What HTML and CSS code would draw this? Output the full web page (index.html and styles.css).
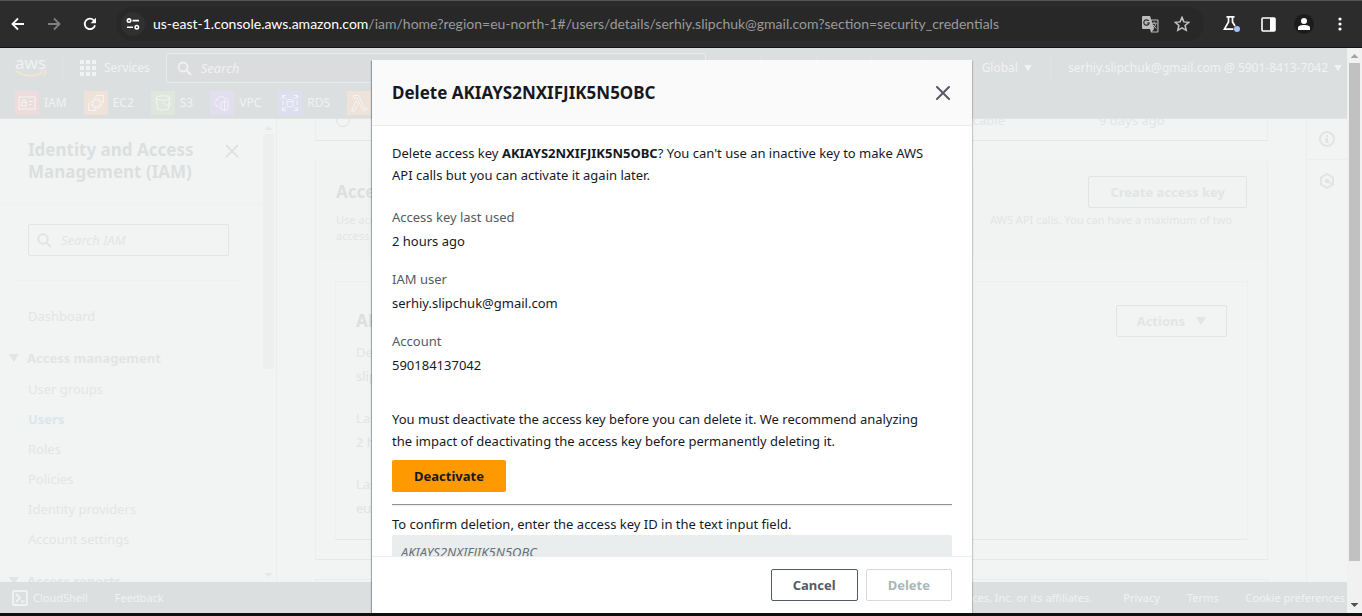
FILE: index.html
```html
<!DOCTYPE html>
<html lang="en">
<head>
<meta charset="utf-8">
<title>IAM | Security credentials</title>
<link rel="stylesheet" href="styles.css">
</head>
<body>
<header class="chrome">
  <button class="chrome-btn" aria-label="Back"><svg width="14" height="14" viewBox="0 0 14 14"><path d="M13 7H2M7 1.5 1.5 7 7 12.5" fill="none" stroke="#fff" stroke-width="1.8"/></svg></button>
  <button class="chrome-btn" aria-label="Forward"><svg width="14" height="14" viewBox="0 0 14 14"><path d="M1 7h11M7 1.5 12.500 7 7 12.500" fill="none" stroke="#808080" stroke-width="1.800"/></svg></button>
  <button class="chrome-btn" aria-label="Reload"><svg width="14" height="14" viewBox="0 0 14 14"><path d="M12 8.200A5.200 5.200 0 1 1 10.800 3.400L12 4.500" fill="none" stroke="#fff" stroke-width="1.800"/><path d="M13 .8v5.400H7.600z" fill="#fff"/></svg></button>
  <div class="omnibox">
    <button class="site-info" aria-label="Site information"><svg width="14" height="12" viewBox="0 0 14 12"><g fill="none" stroke="#fff" stroke-width="1.600"><circle cx="3" cy="2.600" r="1.700"/><path d="M6.500 2.600H13M1 9.200h6"/><circle cx="10.800" cy="9.200" r="1.700"/></g></svg></button>
    <div class="url"><span class="host">us-east-1.console.aws.amazon.com</span>/iam/home?region=eu-north-1#/users/details/serhiy.slipchuk@gmail.com?section=security_credentials</div>
    <button class="omni-btn" aria-label="Translate"><svg width="17" height="17" viewBox="0 0 17 17"><path d="M1 0h7l1.200 3.500H15.500a1 1 0 0 1 1 1V15.500a1 1 0 0 1-1 1H9L8 13H1a1 1 0 0 1-1-1V1a1 1 0 0 1 1-1z" fill="#bcbcbc"/><path d="M9.600 4.600h5.800v10.800H10l2-2.400z" fill="#2a2a2a"/><path d="M6.800 5A2.700 2.700 0 1 0 7.200 7H4.800" fill="none" stroke="#2a2a2a" stroke-width="1.200"/><path d="M9.800 7.200h5M12.200 5.800v1.400M14 7.500c-.5 2-1.600 3.400-3 4.500M10.800 8.500c.8 1.600 2 2.800 3.600 3.800" fill="none" stroke="#bcbcbc"/></svg></button>
    <button class="omni-btn" aria-label="Bookmark"><svg width="16" height="16" viewBox="0 0 16 16"><path d="m8 1.400 1.900 4.500 4.900.4-3.700 3.200 1.100 4.800L8 11.800l-4.200 2.500 1.100-4.800L1.200 6.300l4.900-.4z" fill="none" stroke="#c4c4c4" stroke-width="1.500"/></svg></button>
  </div>
  <div class="chrome-tools">
    <button class="chrome-btn" aria-label="Experiments"><svg width="18" height="18" viewBox="0 0 18 18"><path d="M3.500 1.800h8M5.500 2v5L1.400 14.200h9M9.500 2v5l2.500 4" fill="none" stroke="#fff" stroke-width="1.700"/><circle cx="14" cy="14" r="3" fill="#a0c3ff"/></svg></button>
    <button class="chrome-btn" aria-label="Side panel"><svg width="15" height="15" viewBox="0 0 15 15"><rect x="1" y="1" width="13" height="13" rx="1" fill="none" stroke="#fff" stroke-width="1.600"/><path d="M9 1h5v13H9z" fill="#fff"/></svg></button>
    <button class="chrome-btn avatar" aria-label="Profile"><svg width="20" height="20" viewBox="0 0 20 20"><circle cx="10" cy="10" r="10" fill="#1c1c1c"/><circle cx="10" cy="7" r="3" fill="#fff"/><path d="M4 16v-2.200C4 11.800 7 11 10 11s6 .8 6 2.800V16z" fill="#fff"/></svg></button>
    <button class="chrome-btn" aria-label="Menu"><svg width="4" height="14" viewBox="0 0 4 14"><g fill="#fff"><circle cx="2" cy="2" r="1.600"/><circle cx="2" cy="7" r="1.600"/><circle cx="2" cy="12" r="1.600"/></g></svg></button>
  </div>
</header>

<div class="viewport">
  <div class="page">
    <header class="top">
      <div class="top-row">
        <a class="logo" href="#" aria-label="AWS home"><span class="logo-text">aws</span><svg class="smile" width="32" height="9" viewBox="0 0 32 9"><path d="M1 1c8 6 19 6 27 1.500" fill="none" stroke="#f1e4d4" stroke-width="2"/><path d="M25 1c3-1 5-.8 5.500 0s-.4 3.500-2 5" fill="none" stroke="#f1e4d4" stroke-width="1.500"/></svg></a>
        <button class="services"><svg width="16" height="16" viewBox="0 0 16 16"><path d="M0 0h4v4H0zM6 0h4v4H6zM12 0h4v4h-4zM0 6h4v4H0zM6 6h4v4H6zM12 6h4v4h-4zM0 12h4v4H0zM6 12h4v4H6zM12 12h4v4h-4z" fill="#f1f2f2"/></svg>Services</button>
        <label class="top-search"><svg width="15" height="15" viewBox="0 0 15 15"><circle cx="6" cy="6" r="4.500" fill="none" stroke="#f1f2f2" stroke-width="1.800"/><path d="m9.500 9.500 4.500 4.500" stroke="#f1f2f2" stroke-width="2"/></svg><input type="search" placeholder="Search" aria-label="Search"></label>
        <div class="top-icons"><span></span><span></span><span></span><span></span></div>
        <button class="region">Global <i class="caret"></i></button>
        <button class="account">serhiy.slipchuk@gmail.com @ 5901-8413-7042 <i class="caret"></i></button>
      </div>
      <nav class="favs">
        <a href="#"><svg class="fav red" viewBox="0 0 24 24"><rect x="4" y="6" width="16" height="12"/><path d="M6.500 11.500h5V15h-5zM7.500 11.500V10a1.500 1.500 0 0 1 3 0v1.500M14 10.500h4M14 13.500h2.500"/></svg>IAM</a>
        <a href="#"><svg class="fav orange" viewBox="0 0 24 24"><path d="M9 9h7v7H9zM11 6.500V9M14 6.500V9M11 16v2.500M14 16v2.500M6.500 11H9M6.500 14H9M16 11h2.500M16 14h2.500M12 6V4.500h7.500V12H18M6 12H4.500v7.500H12V18"/></svg>EC2</a>
        <a href="#"><svg class="fav green" viewBox="0 0 24 24"><ellipse cx="12" cy="7" rx="7" ry="2.200"/><path d="m5 7 1.800 11c1.500 1.400 8.900 1.400 10.400 0L19 7M12 12c3 2 7 3 7.500 2s-.5-2-2-2.600"/></svg>S3</a>
        <a href="#"><svg class="fav violet" viewBox="0 0 24 24"><path d="M9 15H7.500C3.500 15 3.500 10 7 9.600 7.500 5 13 4 15 8c2 0 3.500 1 3.500 2.500"/><path d="M11 11.500 14.500 10l3.500 1.500V18l-3.500 1.500L11 18zM14.500 10v9.500"/></svg>VPC</a>
        <a href="#"><svg class="fav blue" viewBox="0 0 24 24"><path d="M4.500 8V4.500H8M16 4.500h3.500V8M19.500 16v3.500H16M8 19.500H4.500V16M5 5l3 3M19 5l-3 3M19 19l-3-3M5 19l3-3M5 10v4M19 10v4M9 9.500v5.500c1 1.200 5 1.200 6 0V9.500"/><ellipse cx="12" cy="9.500" rx="3" ry="1.200"/></svg>RDS</a>
        <a href="#" aria-label="Lambda"><svg class="fav orange" viewBox="0 0 24 24"><path d="M6.500 4.500h5l6 13 2-1 .5 2-4 1.500L10 7H6.500zM9 10l2 3.500L7.500 20h-3z"/></svg></a>
      </nav>
    </header>

    <div class="body">
      <aside class="side">
        <div class="side-main">
          <div class="side-head"><h2>Identity and Access Management (IAM)</h2><button aria-label="Close navigation"><svg width="14" height="14" viewBox="0 0 14 14"><path d="m1 1 12 12M13 1 1 13" stroke="#dfe2e2" stroke-width="2"/></svg></button></div>
          <label class="side-search"><svg width="15" height="15" viewBox="0 0 15 15"><circle cx="6" cy="6" r="4.800" fill="none" stroke="#e2e4e4" stroke-width="2"/><path d="m9.500 9.500 4.500 4.500" stroke="#e2e4e4" stroke-width="2"/></svg><input type="search" placeholder="Search IAM" aria-label="Search IAM"></label>
          <nav class="side-nav">
            <a class="dash" href="#">Dashboard</a>
            <button class="group"><i class="caret"></i>Access management</button>
            <a href="#">User groups</a>
            <a href="#" class="current">Users</a>
            <a href="#">Roles</a>
            <a href="#">Policies</a>
            <a href="#">Identity providers</a>
            <a href="#">Account settings</a>
            <button class="group reports"><i class="caret"></i>Access reports</button>
          </nav>
        </div>
        <div class="side-scroll"><i class="up"></i><div class="side-thumb"></div><i class="down"></i></div>
      </aside>

      <main class="content">
        <section class="card mfa"><input type="radio" aria-label="Select device"><span class="mfa-cert">Not applicable</span><span class="mfa-date">9 days ago</span></section>
        <section class="card keys">
          <div class="keys-head">
            <div class="keys-title"><h2>Access keys (1)</h2><button class="ghost">Create access key</button></div>
            <p><span>Use access keys to send programmatic calls to AWS</span><span>AWS API calls. You can have a maximum of two</span></p>
            <p>access keys (active or inactive) at a time.</p>
          </div>
          <div class="key-card">
            <div class="key-head"><h2>AKIAYS2NXIFJIK5N5OBC</h2><button class="ghost actions">Actions <i class="caret"></i></button></div>
            <dl><dt>Description</dt><dd>slipchuk</dd><dt>Last used</dt><dd>2 hours ago</dd><dt>Last used region</dt><dd>eu-north-1</dd></dl>
          </div>
        </section>
        <section class="card next"></section>
      </main>

      <aside class="rail">
        <button aria-label="Info"><svg width="16" height="16" viewBox="0 0 16 16"><circle cx="8" cy="8" r="7" fill="none" stroke="#e2e4e4" stroke-width="2"/><path d="M7 4h2v2H7zM6 7h3v3.500h1V12H6v-1.500h1V8.500H6z" fill="#e2e4e4"/></svg></button>
        <button aria-label="Resources"><svg width="16" height="16" viewBox="0 0 16 16"><path d="m8 1 6 3.500v7L8 15l-6-3.500v-7z" fill="none" stroke="#e2e4e4" stroke-width="2"/><circle cx="8" cy="8" r="2.300" fill="#e2e4e4"/><path d="m8 8 5 3" stroke="#e2e4e4" stroke-width="2"/></svg></button>
      </aside>
    </div>

    <footer class="foot">
      <button class="shell"><svg width="16" height="16" viewBox="0 0 16 16"><rect x="1" y="1" width="14" height="14" rx="1" fill="none" stroke="#f1f2f2" stroke-width="1.800"/><path d="m4 4 4 4-4 4M9 11.500h3.500" fill="none" stroke="#f1f2f2" stroke-width="1.800"/></svg>CloudShell</button>
      <a href="#">Feedback</a>
      <span class="legal">© 2024, Amazon Web Services, Inc. or its affiliates.</span>
      <a href="#">Privacy</a><a href="#">Terms</a><a href="#">Cookie preferences</a>
    </footer>

    <div class="overlay">
      <section class="modal" role="dialog" aria-labelledby="modal-title">
        <header class="modal-head"><h1 id="modal-title">Delete AKIAYS2NXIFJIK5N5OBC</h1><button aria-label="Close"><svg width="14" height="14" viewBox="0 0 14 14"><path d="m1 1 12 12M13 1 1 13" stroke="#545b64" stroke-width="2" stroke-linecap="round"/></svg></button></header>
        <div class="modal-body">
          <p>Delete access key <b>AKIAYS2NXIFJIK5N5OBC</b>? You can't use an inactive key to make AWS API calls but you can activate it again later.</p>
          <dl><dt>Access key last used</dt><dd>2 hours ago</dd><dt>IAM user</dt><dd>serhiy.slipchuk@gmail.com</dd><dt>Account</dt><dd>590184137042</dd></dl>
          <p>You must deactivate the access key before you can delete it. We recommend analyzing the impact of deactivating the access key before permanently deleting it.</p>
          <button class="primary">Deactivate</button>
          <hr>
          <label for="confirm">To confirm deletion, enter the access key ID in the text input field.</label>
          <input id="confirm" type="text" placeholder="AKIAYS2NXIFJIK5N5OBC" disabled>
        </div>
        <footer class="modal-foot"><button class="cancel">Cancel</button><button class="delete" disabled>Delete</button></footer>
      </section>
    </div>
  </div>
  <div class="scroll"><i class="up"></i><div class="thumb"></div><i class="down"></i></div>
</div>
</body>
</html>
```
FILE: styles.css
```css
* { box-sizing: border-box; }
html, body { height: 100%; }
body {
  margin: 0;
  display: flex;
  flex-direction: column;
  overflow: hidden;
  padding-bottom: 3px;
  background: #100f0c;
  color: #16191f;
  font: 13px/22px "Noto Sans", "Open Sans", sans-serif;
}
button, input { font: inherit; color: inherit; }
button { padding: 0; border: 0; background: none; display: flex; align-items: center; white-space: nowrap; }
a { color: inherit; text-decoration: none; white-space: nowrap; }
h1, h2, p, dl, dd { margin: 0; }
svg { flex: none; display: block; }

/* Browser toolbar */
.chrome {
  flex: none;
  display: flex;
  align-items: center;
  height: 48px;
  padding: 0 12px 0 0;
  background: #2c2c2c;
  border-top: 1px solid #555;
  border-bottom: 1px solid #17101a;
}
.chrome-btn { width: 36px; height: 34px; justify-content: center; }
.chrome > .chrome-btn { flex: none; }
.omnibox {
  flex: 1;
  min-width: 0;
  display: flex;
  align-items: center;
  height: 34px;
  margin-left: 8px;
  padding: 0 6px 0 5px;
  border-radius: 17px;
  background: #282828;
}
.site-info { flex: none; width: 24px; height: 24px; border-radius: 12px; justify-content: center; background: #303030; }
.url { flex: 1; min-width: 0; overflow: hidden; margin-left: 8px; color: #9a9a9a; white-space: nowrap; font-family: Lato, "Noto Sans", sans-serif; font-size: 14px; }
.host { color: #fff; }
.omni-btn { flex: none; width: 32px; height: 32px; justify-content: center; }
.chrome-tools { flex: none; display: flex; align-items: center; margin-left: 10px; }
.chrome-tools .chrome-btn:last-child { width: 20px; }
.avatar { margin-right: 8px; }

.viewport { flex: 1; min-height: 0; display: flex; }
.page { flex: 1; min-width: 0; position: relative; display: flex; flex-direction: column; overflow: hidden; background: #f2f4f3; }
.caret { width: 10px; height: 8px; background: currentColor; clip-path: polygon(0 0, 100% 0, 50% 100%); flex: none; }

/* Console header */
.top { flex: none; background: #dcdfe0; color: #f1f2f2; font-size: 12px; border-bottom: 1px solid #e2e4e4; }
.top-row { display: flex; align-items: center; height: 40px; padding: 0 5px 0 15px; }
.logo { width: 48px; height: 24px; border-right: 1px solid #e1e4e4; line-height: 14px; }
.logo-text { display: block; font-size: 17px; line-height: 14px; }
.services { gap: 8px; margin: 0 16px 0 17px; }
.top-search { width: 540px; height: 30px; display: flex; align-items: center; gap: 9px; padding: 0 10px; border: 1px solid #e9ebeb; border-radius: 2px; background: #dbdcde; }
.top-search input { flex: 1; min-width: 0; border: 0; background: none; outline: 0; padding: 0; font-size: 13px; }
input::placeholder { color: inherit; font-style: italic; opacity: 1; }
.top-icons { flex: 1; display: flex; justify-content: space-evenly; }
.top-icons span { width: 1px; height: 22px; background: #e1e4e4; }
.region { gap: 6px; padding-right: 18px; border-right: 1px solid #e1e4e4; }
.account { gap: 6px; padding-left: 17px; }
.region .caret, .account .caret { width: 8px; height: 7px; }
.favs { display: flex; gap: 17px; height: 30px; padding: 0 15px; align-items: center; }
.favs a { display: flex; align-items: center; gap: 5px; }
.fav { width: 24px; height: 24px; fill: none; stroke: #f4f4f4; }
.red { background: #eedcdd; }
.orange { background: #efe2d8; }
.green { background: #dfe7dc; }
.violet { background: #e2def0; }
.blue { background: #dddff0; }

.body { flex: 1; min-height: 0; display: flex; }

/* Side navigation */
.side { flex: none; width: 277px; display: flex; border-right: 1px solid #ebeeed; color: #e2e5e5; }
.side-main { flex: 1; min-width: 0; overflow: hidden; }
.side-head { display: flex; align-items: flex-start; justify-content: space-between; gap: 20px; height: 86px; padding: 20px 23px 0 28px; border-bottom: 1px solid #eef1f0; }
.side-head h2 { color: #dcdfe0; font-size: 17px; line-height: 22px; }
.side-head button { height: 24px; }
.side-search { display: flex; align-items: center; gap: 9px; height: 32px; margin: 19px 33px 24px 28px; padding: 0 8px; border: 1px solid #e2e5e5; border-radius: 2px; }
.side-search input { flex: 1; min-width: 0; padding: 0; border: 0; outline: 0; background: none; }
.side-nav { display: flex; flex-direction: column; margin: 0 22px 0 16px; border-top: 1px solid #eef1f0; }
.side-nav a { line-height: 30px; padding-left: 12px; }
.side-nav .dash { padding-top: 20px; }
.group { gap: 8px; margin: 16px 0 5px -7px; height: 22px; font-weight: bold; }
.side-nav .current { color: #d9e6ee; font-weight: bold; }
.side-scroll { flex: none; display: flex; flex-direction: column; align-items: center; justify-content: space-between; width: 14px; padding: 7px 2px 5px 1px; color: #e6e8e8; }
.up, .down { flex: none; width: 8px; height: 4px; background: currentColor; clip-path: polygon(50% 0, 100% 100%, 0 100%); }
.down { clip-path: polygon(0 0, 100% 0, 50% 100%); }
.side-thumb { width: 11px; height: 52%; margin: 4px 0 auto; background: #edefef; }

/* Page content */
.content { flex: 1; min-width: 0; overflow: hidden; padding: 0 38px; color: #e2e5e5; }
.card { border: 1px solid #ebedec; border-bottom-color: #e6e8e8; }
.mfa { display: flex; height: 22px; margin-bottom: 20px; padding-left: 20px; border-top: 0; overflow: hidden; line-height: 2px; }
.mfa input { appearance: none; width: 14px; height: 14px; margin: -6px 0 0; border: 1px solid #dfe2e2; border-radius: 7px; }
.mfa-cert { flex: 1; text-align: right; padding-right: 94px; }
.mfa-date { width: 168px; }
.keys { height: 399px; border-top: 0; }
.keys-head { height: 102px; padding: 14px 20px 0; background: #f1f3f2; font-size: 11px; line-height: 16px; border-bottom: 1px solid #f3f5f4; }
.keys-head p { display: flex; justify-content: space-between; padding-right: 15px; }
.keys-title, .key-head { display: flex; justify-content: space-between; align-items: center; height: 34px; }
.keys-title { margin-bottom: 3px; }
.content h2 { color: #dcdfe0; font-size: 17px; line-height: 22px; }
.ghost { height: 32px; padding: 0 21px; border: 1px solid #e1e4e4; border-radius: 2px; font-size: 13px; font-weight: bold; }
.actions { gap: 11px; padding: 0 20px; }
.key-card { margin: 18px 19px 0; height: 259px; padding: 22px 20px 0; border: 1px solid #eef0ef; border-bottom-color: #e6e8e8; }
.key-card dl { margin-top: 2px; }
.key-card dt { line-height: 24px; }
.key-card dd { line-height: 24px; margin-bottom: 18px; color: #dfe2e2; }
.next { height: 40px; margin-top: 19px; }

.rail { flex: none; width: 41px; border-left: 1px solid #eaedec; }
.rail button { width: 100%; height: 41px; justify-content: center; border-bottom: 1px solid #ebeeed; }
.rail button + button { border: 0; }

.foot { flex: none; display: flex; align-items: center; gap: 27px; height: 31px; padding: 0 2px 0 12px; background: #dcdfe0; color: #f1f2f2; font-size: 11px; }
.shell { gap: 5px; }
.legal { flex: 1; text-align: right; white-space: nowrap; margin-right: 4px; }

/* Dialog */
.overlay { position: absolute; inset: 0; display: flex; justify-content: center; padding: 12px 3px 0 0; }
.modal { display: flex; flex-direction: column; width: 600px; max-width: 100%; background: #fff; box-shadow: 0 1px 1px 0 rgba(0, 28, 36, .3), 1px 1px 1px 0 rgba(0, 28, 36, .15), -1px 1px 1px 0 rgba(0, 28, 36, .3); }
.modal-head { flex: none; display: flex; align-items: center; justify-content: space-between; height: 66px; padding: 0 22px 0 20px; background: #fafafa; border-bottom: 1px solid #eaeded; }
.modal-head h1 { font-size: 17px; line-height: 22px; }
.modal-body { flex: 1; min-height: 0; overflow: hidden; padding: 16px 20px 0; }
.modal-body p { padding-right: 16px; }
.modal-body dl { margin: 20px 0 32px; }
.modal-body dt { color: #545b64; }
.modal-body dd { margin: 2px 0 16px; }
.primary { height: 32px; margin-top: 8px; padding: 0 22px; border-radius: 2px; background: #ff9900; font-weight: bold; }
.modal-body hr { height: 2px; margin: 12px 0 7px; border: 0; border-top: 1px solid #949494; border-bottom: 1px solid #eee; }
.modal-body label { display: block; }
#confirm { display: block; width: 100%; height: 34px; padding: 0 9px; border: 0; border-radius: 2px; background: #eaeded; color: #687078; }
.modal-foot { flex: none; display: flex; justify-content: flex-end; gap: 8px; height: 57px; padding: 12px 20px; border-top: 1px solid #eaeded; }
.modal-foot button { height: 32px; padding: 0 21px; border: 1px solid #545b64; border-radius: 2px; color: #545b64; font-weight: bold; }
.modal-foot .delete { border-color: #d5dbdb; color: #aab7b8; }

/* Window scrollbar */
.scroll { flex: none; display: flex; flex-direction: column; align-items: center; width: 15px; padding: 6px 2px; background: #f1f1f1; color: #505050; }
.scroll .up { color: #a3a3a3; }
.thumb { width: 11px; height: 90%; margin: 5px 0 auto; background: #c1c1c1; }
```
